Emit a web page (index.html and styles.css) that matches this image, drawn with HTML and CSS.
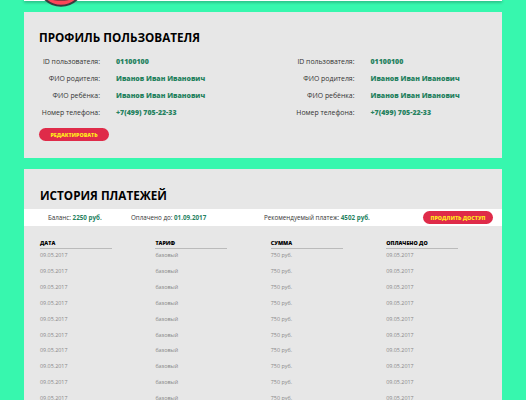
FILE: index.html
```html
<!DOCTYPE html>
<html lang="ru">
<head>
  <meta charset="UTF-8">
  <meta name="viewport" content="width=device-width, initial-scale=1">
  <title>Профиль пользователя</title>
  <link rel="stylesheet" href="styles.css">
</head>
<body>
  <div class="container">
    <header class="header">
      <svg class="logo" width="36" height="8" viewBox="0 0 36 8">
        <circle cx="18" cy="-17.3" r="23" fill="#fb4658" stroke="#383a3e" stroke-width="2"/>
        <ellipse cx="18" cy="-1" rx="9" ry="2" fill="#8d3844"/>
      </svg>
    </header>

    <!-- Profile -->
    <section class="section profile">
      <h1>Профиль пользователя</h1>
      <div class="profile-columns">
        <dl class="info">
          <dt>ID пользователя:</dt><dd>01100100</dd>
          <dt>ФИО родителя:</dt><dd>Иванов Иван Иванович</dd>
          <dt>ФИО ребёнка:</dt><dd>Иванов Иван Иванович</dd>
          <dt>Номер телефона:</dt><dd>+7(499) 705-22-33</dd>
        </dl>
        <dl class="info">
          <dt>ID пользователя:</dt><dd>01100100</dd>
          <dt>ФИО родителя:</dt><dd>Иванов Иван Иванович</dd>
          <dt>ФИО ребёнка:</dt><dd>Иванов Иван Иванович</dd>
          <dt>Номер телефона:</dt><dd>+7(499) 705-22-33</dd>
        </dl>
      </div>
      <button class="btn">Редактировать</button>
    </section>

    <!-- Payment history -->
    <section class="section history">
      <h2>История платежей</h2>
      <div class="balance">
        <span class="balance-sum">Баланс: <b>2250 руб.</b></span>
        <span class="balance-date">Оплачено до: <b>01.09.2017</b></span>
        <span class="balance-next">Рекомендуемый платеж: <b>4502 руб.</b></span>
        <button class="btn">Продлить доступ</button>
      </div>
      <div class="payments">
        <ul>
          <li class="payments-title">Дата</li>
          <li>09.05.2017</li>
          <li>09.05.2017</li>
          <li>09.05.2017</li>
          <li>09.05.2017</li>
          <li>09.05.2017</li>
          <li>09.05.2017</li>
          <li>09.05.2017</li>
          <li>09.05.2017</li>
          <li>09.05.2017</li>
          <li>09.05.2017</li>
        </ul>
        <ul>
          <li class="payments-title">Тариф</li>
          <li>базовый</li>
          <li>базовый</li>
          <li>базовый</li>
          <li>базовый</li>
          <li>базовый</li>
          <li>базовый</li>
          <li>базовый</li>
          <li>базовый</li>
          <li>базовый</li>
          <li>базовый</li>
        </ul>
        <ul>
          <li class="payments-title">Сумма</li>
          <li>750 руб.</li>
          <li>750 руб.</li>
          <li>750 руб.</li>
          <li>750 руб.</li>
          <li>750 руб.</li>
          <li>750 руб.</li>
          <li>750 руб.</li>
          <li>750 руб.</li>
          <li>750 руб.</li>
          <li>750 руб.</li>
        </ul>
        <ul>
          <li class="payments-title">Оплачено до</li>
          <li>09.05.2017</li>
          <li>09.05.2017</li>
          <li>09.05.2017</li>
          <li>09.05.2017</li>
          <li>09.05.2017</li>
          <li>09.05.2017</li>
          <li>09.05.2017</li>
          <li>09.05.2017</li>
          <li>09.05.2017</li>
          <li>09.05.2017</li>
        </ul>
      </div>
    </section>
  </div>
</body>
</html>
```
FILE: styles.css
```css
* {
  box-sizing: border-box;
}
body {
  margin: 0;
  height: 400px;
  overflow: hidden;
  background-color: #37f7ae;
  font-family: "Open Sans", "Noto Sans", sans-serif;
  color: #333;
}
.container {
  width: 478px;
  margin: 0 auto;
}
.header {
  height: 1px;
  margin-bottom: 11px;
  background: #fff;
  box-shadow: 0 1px 3px rgba(0,0,0,0.6);
}
/* the badge hangs below the header bar */
.logo {
  display: block;
  position: relative;
  margin-left: 19px;
}
.section {
  background: #e7e7e7;
}
h1, h2 {
  margin: 0;
  font-size: 11.7px;
  line-height: 16px;
  font-weight: 700;
  text-transform: uppercase;
  color: #000;
}
.btn {
  display: block;
  width: 70px;
  height: 13px;
  padding: 0;
  border: none;
  border-radius: 7px;
  background-color: #df2b49;
  color: #ffe81c;
  font-family: inherit;
  font-size: 5.3px;
  line-height: 14px;
  font-weight: 800;
  text-transform: uppercase;
  white-space: nowrap;
  cursor: pointer;
}

/* Profile */
.profile {
  height: 146px;
  margin-bottom: 11px;
  padding: 17px 15px 0;
}
.profile-columns {
  display: flex;
  margin-top: 8px;
  margin-bottom: 7px;
}
.info {
  display: grid;
  grid-template-columns: 61px 1fr;
  column-gap: 16px;
  grid-auto-rows: 17px;
  width: 254.5px;
  margin: 0;
  font-size: 6.9px;
  line-height: 17px;
  white-space: nowrap;
}
.info:last-child {
  width: 190px;
}
.info dt {
  text-align: right;
}
.info dd {
  margin: 0;
  font-size: 7px;
  font-weight: 800;
  color: #26825f;
}

/* Payment history */
.history {
  height: 240px;
  padding-top: 18px;
}
.history h2 {
  margin: 0 16px 6px;
}
.balance {
  display: flex;
  align-items: center;
  height: 17px;
  padding: 0 9px 0 24px;
  background: #fff;
  font-size: 6.25px;
  line-height: 17px;
  white-space: nowrap;
}
.balance b {
  color: #26825f;
}
.balance-sum {
  width: 83px;
}
.balance-date {
  width: 133px;
}
.balance .btn {
  margin-left: auto;
}
.payments {
  display: grid;
  grid-template-columns: repeat(4, 72px);
  column-gap: 43.4px;
  margin: 12px 16px 0;
}
.payments ul {
  margin: 0;
  padding: 0;
  list-style: none;
}
.payments li {
  height: 15.85px;
  font-size: 5.4px;
  line-height: 15.85px;
  color: #888;
}
.payments .payments-title {
  height: 11px;
  margin-bottom: -0.6px;
  border-bottom: 1px solid #bbb;
  font-size: 5.35px;
  line-height: 10px;
  font-weight: 800;
  text-transform: uppercase;
  color: #000;
}
```
